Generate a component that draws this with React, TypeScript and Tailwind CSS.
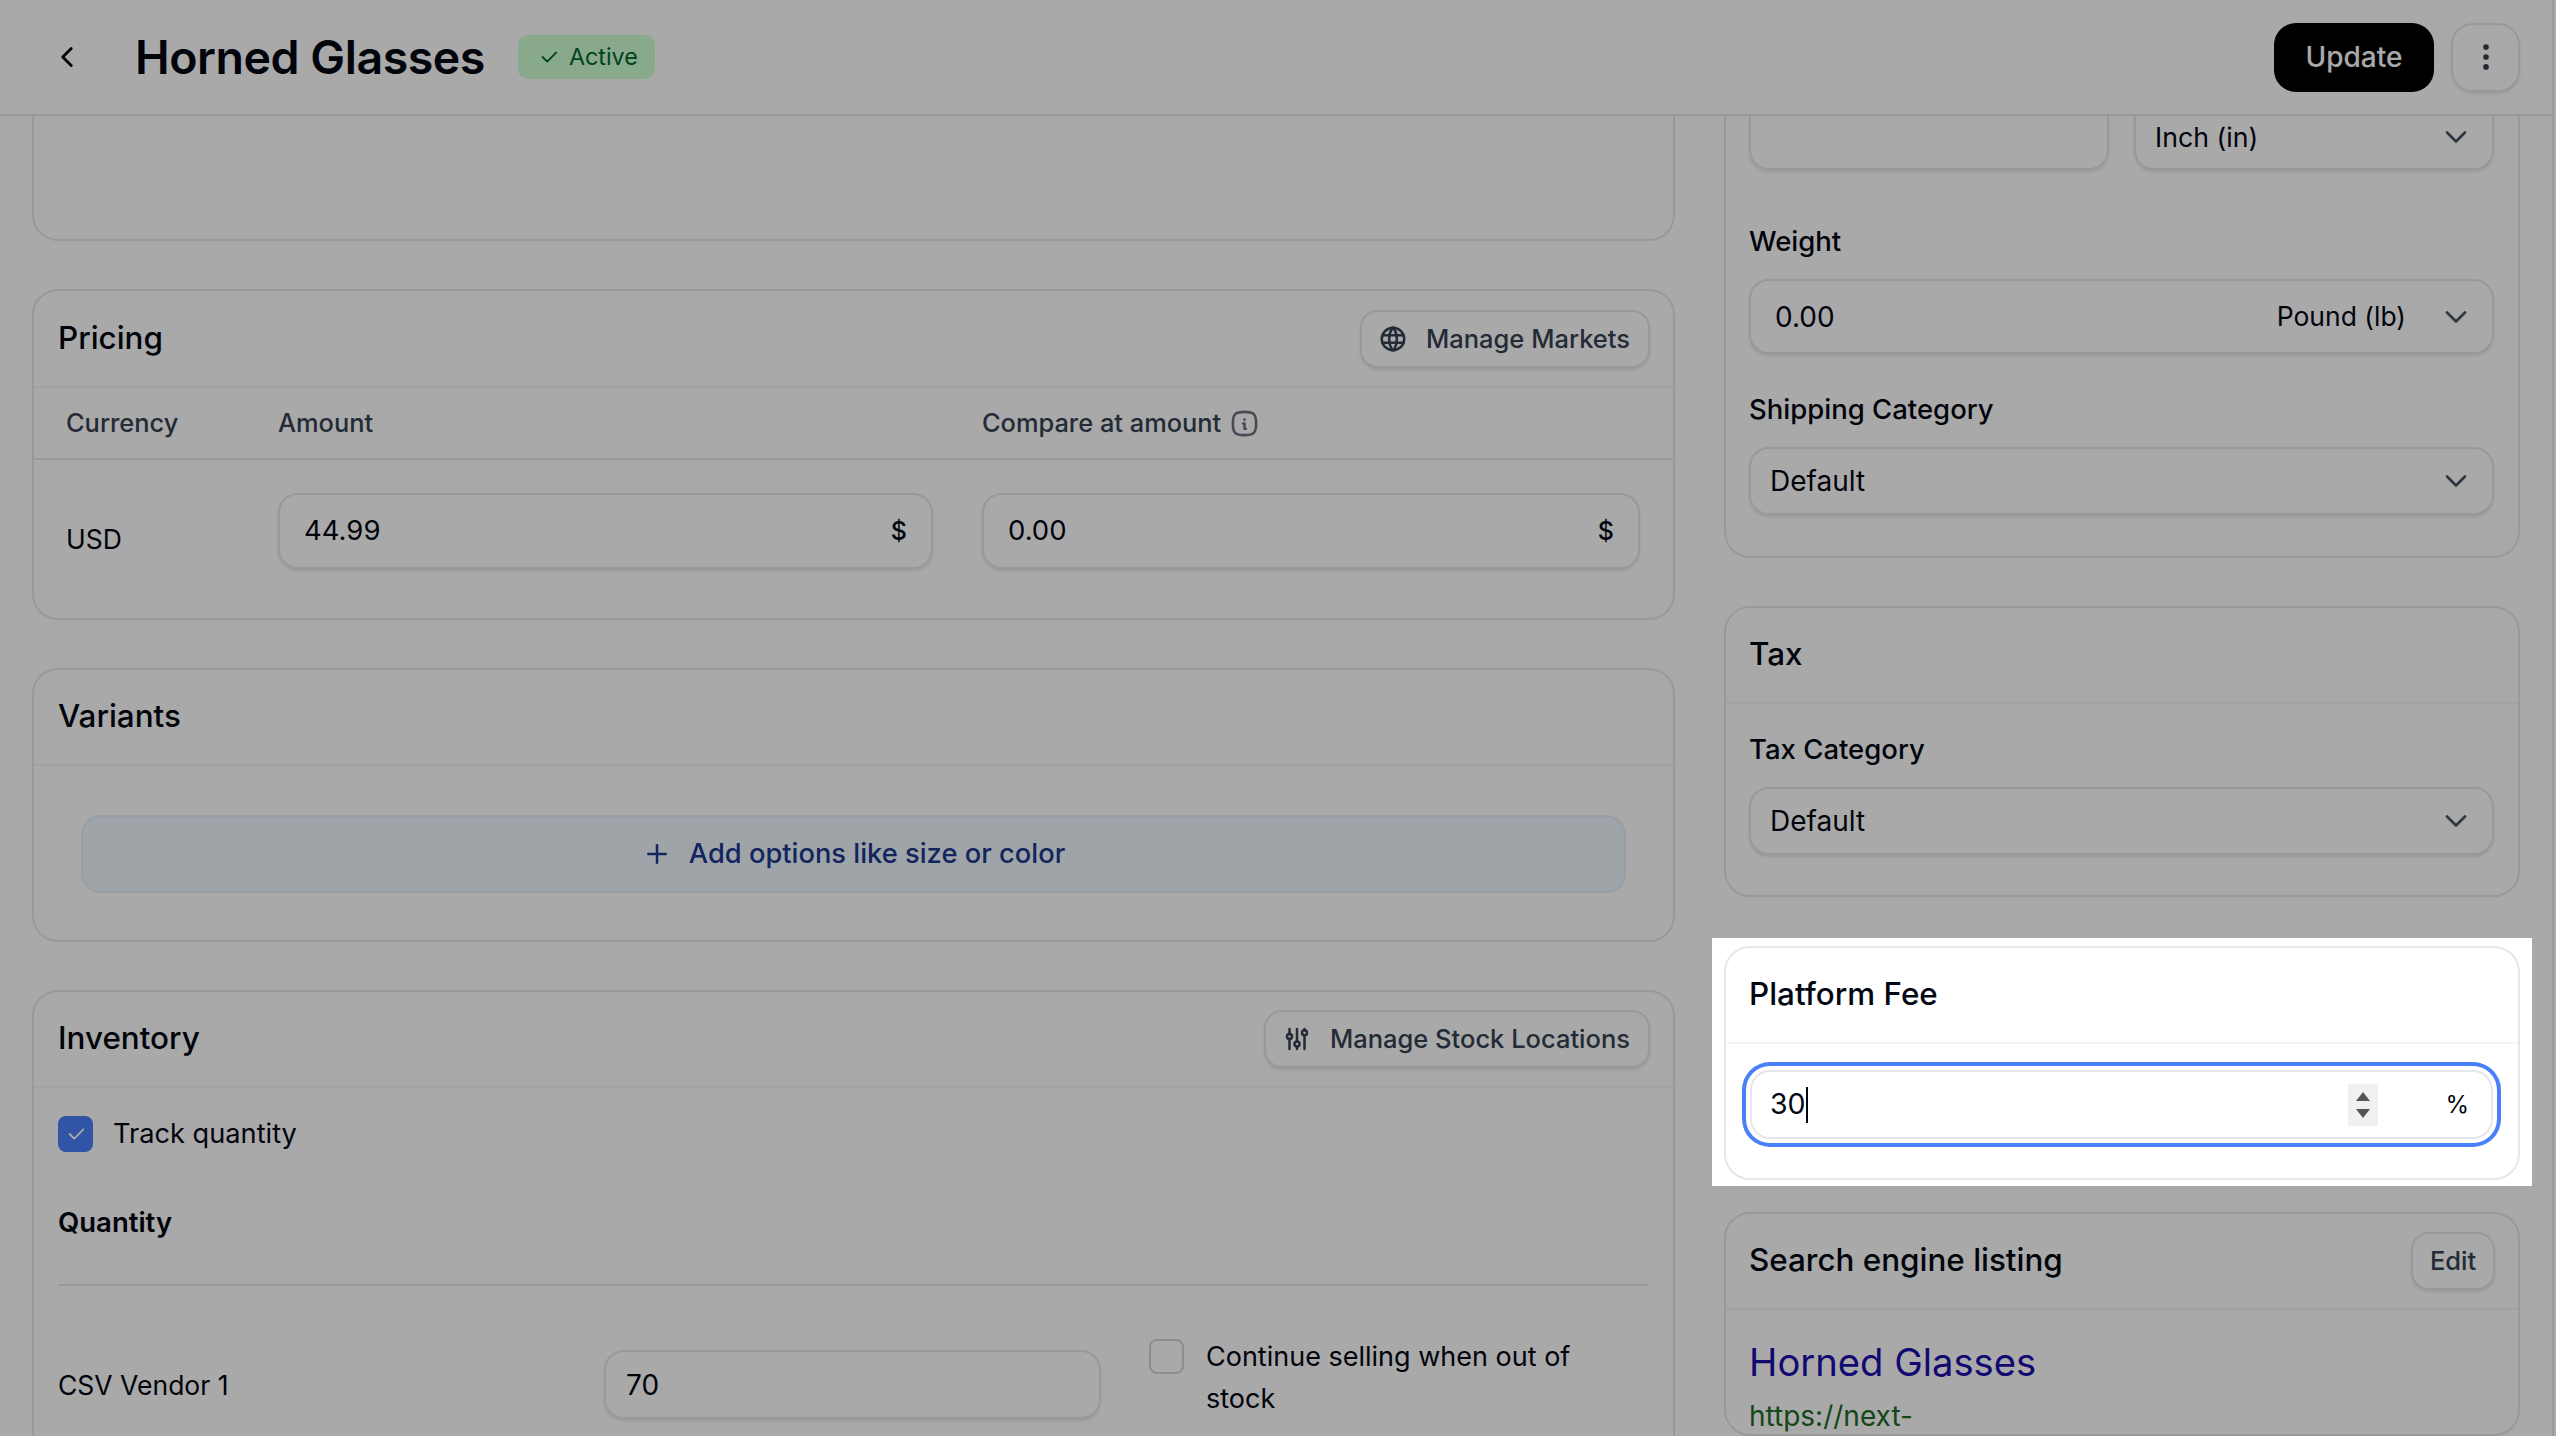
import React from "react";
import {
  TbAdjustments,
  TbCheck,
  TbChevronDown,
  TbChevronLeft,
  TbDotsVertical,
  TbInfoSquareRounded,
  TbPlus,
  TbWorld,
} from "react-icons/tb";

function Card({
  title,
  action,
  className = "",
  headerHeight = "h-[96px]",
  headerPad = "pl-[24px]",
  children,
}: {
  title?: string;
  action?: React.ReactNode;
  className?: string;
  headerHeight?: string;
  headerPad?: string;
  children?: React.ReactNode;
}) {
  return (
    <section className={`rounded-[26px] border-2 border-gray-200 bg-white ${className}`}>
      {title && (
        <div className={`flex ${headerHeight} items-center justify-between border-b-2 border-gray-100 ${headerPad} pr-[23px]`}>
          <h2 className="text-[31.4px] font-medium leading-none text-gray-950">{title}</h2>
          {action}
        </div>
      )}
      {children}
    </section>
  );
}

function OutlineButton({ icon, label }: { icon?: React.ReactNode; label: string }) {
  return (
    <button className="flex h-[58px] items-center gap-[18px] rounded-[18px] border-2 border-gray-200 bg-white pl-[16px] pr-[18px] text-[25.5px] font-medium leading-none text-gray-700 shadow-[0_2px_3px_rgba(0,0,0,0.1)]">
      {icon}
      {label}
    </button>
  );
}

function Select({
  value,
  className = "",
  height = "h-[68px]",
  text = "text-[28px]",
}: {
  value: string;
  className?: string;
  height?: string;
  text?: string;
}) {
  return (
    <div
      className={`flex ${height} items-center justify-between rounded-[20px] border-2 border-gray-200 bg-white pl-[19px] pr-[18px] ${text} leading-none text-gray-950 shadow-[0_2px_3px_rgba(0,0,0,0.1)] ${className}`}
    >
      <span>{value}</span>
      <TbChevronDown size={36} strokeWidth={1.8} className="text-gray-600" />
    </div>
  );
}

function Label({ children, className = "" }: { children: React.ReactNode; className?: string }) {
  return <div className={`text-[27.5px] font-medium leading-[36px] text-gray-950 ${className}`}>{children}</div>;
}

function MoneyInput({ value, width }: { value: string; width: string }) {
  return (
    <div
      className={`flex h-[76px] ${width} items-center justify-between rounded-[20px] border-2 border-gray-200 bg-white pl-[24px] pr-[24px] text-[27.5px] leading-none text-gray-950 shadow-[0_2px_3px_rgba(0,0,0,0.1)]`}
    >
      <span>{value}</span>
      <span className="text-[25px] font-medium">$</span>
    </div>
  );
}

export default function App() {
  return (
    <div className="relative h-[1436px] w-[2556px] overflow-hidden bg-white font-['Inter',sans-serif] text-gray-950">
      <div className="h-full w-[2554px] border-r-2 border-gray-200">
        <header className="flex h-[116px] items-center border-b-2 border-gray-200 bg-white pl-[50px] pr-[32px]">
          <TbChevronLeft size={34} className="text-gray-950" />
          <h1 className="ml-[51px] text-[46.5px] font-semibold leading-none tracking-[-0.01em] text-gray-950">Horned Glasses</h1>
          <div className="ml-[33px] flex h-[44px] w-[137px] items-center gap-[9px] rounded-[10px] bg-[#cdffd3] pl-[20px] text-[23.3px] leading-none text-green-800">
            <TbCheck size={22} />
            Active
          </div>
          <div className="ml-auto flex items-center gap-[17px]">
            <button className="flex h-[69px] w-[160px] items-center justify-center rounded-[22px] bg-black text-[28px] font-medium leading-none text-white">
              Update
            </button>
            <button className="flex h-[69px] w-[69px] items-center justify-center rounded-[22px] border-2 border-gray-200 bg-white text-gray-700 shadow-[0_2px_3px_rgba(0,0,0,0.1)]">
              <TbDotsVertical size={34} />
            </button>
          </div>
        </header>

        <main className="flex gap-[49px] pl-[32px]">
          <div className="flex w-[1643px] flex-col">
            <section className="h-[125px] rounded-b-[26px] border-2 border-t-0 border-gray-200 bg-white" />

            <Card
              title="Pricing"
              className="mt-[48px]"
              headerHeight="h-[97px]"
              action={<OutlineButton icon={<TbWorld size={30} />} label="Manage Markets" />}
            >
              <div className="flex h-[72px] items-center border-b-2 border-gray-200 bg-white pl-[32px] text-[25.4px] font-medium leading-none text-gray-700">
                <span className="w-[212px]">Currency</span>
                <span className="w-[704px]">Amount</span>
                <span className="flex items-center gap-[8px]">
                  Compare at amount
                  <TbInfoSquareRounded size={31} className="text-gray-500" />
                </span>
              </div>
              <div className="flex pb-[49px] pl-[32px] pt-[33px]">
                <span className="mt-[33px] w-[212px] text-[26.5px] leading-[26px]">USD</span>
                <MoneyInput value="44.99" width="w-[655px]" />
                <div className="ml-[49px]">
                  <MoneyInput value="0.00" width="w-[658px]" />
                </div>
              </div>
            </Card>

            <Card title="Variants" className="mt-[48px]">
              <div className="px-[47px] pb-[47px] pt-[49px]">
                <button className="flex h-[78px] w-full items-center justify-center gap-[17px] rounded-[20px] border-2 border-[#e3eefc] bg-[#f0f7ff] text-[27.3px] font-medium leading-none text-blue-900">
                  <TbPlus size={30} />
                  Add options like size or color
                </button>
              </div>
            </Card>

            <Card
              title="Inventory"
              className="mt-[48px]"
              action={<OutlineButton icon={<TbAdjustments size={30} />} label="Manage Stock Locations" />}
            >
              <div className="pb-[40px] pl-[24px] pr-[24px] pt-[28px]">
                <div className="flex h-[36px] items-center gap-[20px]">
                  <span className="flex h-[36px] w-[35px] items-center justify-center rounded-[8px] bg-[#4a7ffa] text-white">
                    <TbCheck size={22} />
                  </span>
                  <span className="text-[27.2px] leading-none">Track quantity</span>
                </div>
                <div className="mt-[52px] text-[27.5px] font-semibold leading-[36px]">Quantity</div>
                <div className="mt-[44px] border-t-2 border-gray-200" />
                <div className="mt-[50px] flex h-[84px] items-start">
                  <span className="mt-[28px] w-[546px] text-[26.5px] leading-[42px]">CSV Vendor 1</span>
                  <div className="mt-[14px] flex h-[69px] w-[497px] items-center rounded-[20px] border-2 border-gray-200 bg-white pl-[20px] text-[28px] leading-none shadow-[0_2px_3px_rgba(0,0,0,0.1)]">
                    70
                  </div>
                  <span className="ml-[48px] mt-[3px] h-[35px] w-[35px] rounded-[8px] border-2 border-gray-300 bg-white" />
                  <span className="ml-[22px] w-[420px] text-[27px] leading-[42px]">Continue selling when out of stock</span>
                </div>
              </div>
            </Card>
          </div>

          <div className="flex w-[796px] flex-col">
            <section className="rounded-b-[26px] border-2 border-t-0 border-gray-200 bg-white pb-[41px] pl-[23px] pr-[24px]">
              <div className="flex gap-[25px]">
                <div className="h-[54px] w-[360px] rounded-b-[20px] border-2 border-t-0 border-gray-200 shadow-[0_2px_3px_rgba(0,0,0,0.1)]" />
                <Select value="Inch (in)" height="h-[54px]" text="text-[26.7px]" className="w-[360px] rounded-t-none border-t-0 pb-[10px]" />
              </div>
              <Label className="mt-[53px]">Weight</Label>
              <div className="mt-[20px] flex h-[75px] items-center justify-between rounded-[20px] border-2 border-gray-200 bg-white pl-[24px] pr-[18px] text-[28px] leading-none shadow-[0_2px_3px_rgba(0,0,0,0.1)]">
                <span>0.00</span>
                <span className="flex items-center gap-[32px] text-[26.5px]">
                  Pound (lb)
                  <TbChevronDown size={36} strokeWidth={1.8} className="text-gray-600" />
                </span>
              </div>
              <Label className="mt-[37px]">Shipping Category</Label>
              <Select value="Default" className="mt-[20px]" />
            </section>

            <Card title="Tax" headerPad="pl-[23px]" className="mt-[48px] h-[291px]">
              <div className="pl-[23px] pr-[24px] pt-[27px]">
                <Label>Tax Category</Label>
                <Select value="Default" className="mt-[20px]" />
              </div>
            </Card>

            <Card title="Platform Fee" headerPad="pl-[23px]" className="mt-[49px]">
              <div className="pb-[39px] pl-[24px] pr-[25px] pt-[26px]">
                <div className="flex h-[69px] items-center rounded-[20px] border-2 border-gray-200 bg-white pl-[18px] pr-[22px] text-[28.5px] leading-none shadow-[0_0_0_4px_#fff,0_0_0_8px_#4a7ffa]">
                  <span>30</span>
                  <span className="h-[36px] w-[2px] bg-gray-950" />
                  <span className="ml-auto flex h-[42px] w-[30px] flex-col items-center justify-center gap-[8px] bg-[#f0f0f0]">
                    <svg width="14" height="9" viewBox="0 0 14 9"><path d="M7 0 L14 9 L0 9 Z" fill="#555" /></svg>
                    <svg width="14" height="9" viewBox="0 0 14 9"><path d="M0 0 L14 0 L7 9 Z" fill="#555" /></svg>
                  </span>
                  <span className="ml-[67px] text-[24px]">%</span>
                </div>
              </div>
            </Card>

            <Card
              title="Search engine listing"
              headerPad="pl-[23px]"
              className="mt-[32px]"
              action={
                <button className="flex h-[58px] w-[84px] items-center justify-center rounded-[18px] border-2 border-gray-200 bg-white text-[25.5px] font-medium leading-none text-gray-700 shadow-[0_2px_3px_rgba(0,0,0,0.1)]">
                  Edit
                </button>
              }
            >
              <div className="pl-[23px] pt-[28px]">
                <div className="text-[38.2px] leading-[48px] text-[#1a0dab]">Horned Glasses</div>
                <div className="mt-[12px] text-[28px] leading-[36px] text-[#1e6b23]">https://next-</div>
              </div>
            </Card>
          </div>
        </main>
      </div>

      <div className="absolute left-[1712px] top-[938px] h-[248px] w-[820px] shadow-[0_0_0_3000px_rgba(0,0,0,0.337)]" />
    </div>
  );
}
